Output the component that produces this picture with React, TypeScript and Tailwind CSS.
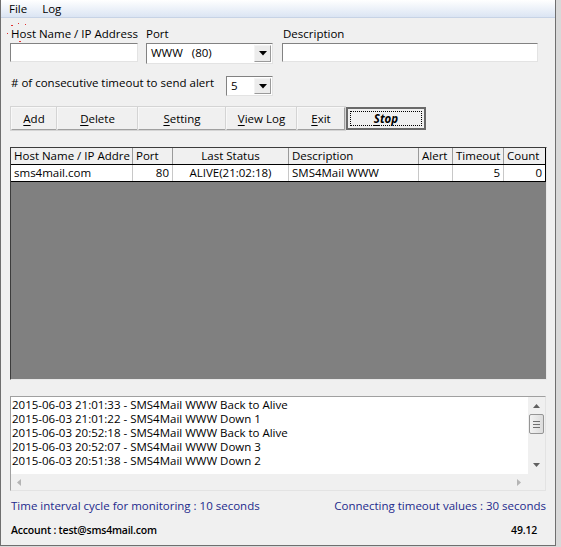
import React from "react";

const COLS = [
  { label: "Host Name / IP Addre", w: "w-[122px]", align: "text-left" },
  { label: "Port", w: "w-[40px]", align: "text-left" },
  { label: "Last Status", w: "w-[116px]", align: "text-center" },
  { label: "Description", w: "w-[130px]", align: "text-left" },
  { label: "Alert", w: "w-[34px]", align: "text-left" },
  { label: "Timeout", w: "w-[51px]", align: "text-left" },
  { label: "Count", w: "w-[41px]", align: "text-left" },
];

const ROW = [
  { v: "sms4mail.com", align: "text-left" },
  { v: "80", align: "text-right" },
  { v: "ALIVE(21:02:18)", align: "text-center" },
  { v: "SMS4Mail WWW", align: "text-left" },
  { v: "", align: "text-left" },
  { v: "5", align: "text-right" },
  { v: "0", align: "text-right" },
];

const LOG = [
  "2015-06-03 21:01:33 - SMS4Mail WWW Back to Alive",
  "2015-06-03 21:01:22 - SMS4Mail WWW Down 1",
  "2015-06-03 20:52:18 - SMS4Mail WWW Back to Alive",
  "2015-06-03 20:52:07 - SMS4Mail WWW Down 3",
  "2015-06-03 20:51:38 - SMS4Mail WWW Down 2",
];

const sunken =
  "border border-t-[#828282] border-l-[#828282] border-b-[#e3e3e3] border-r-[#e3e3e3] bg-white";

function DropArrow() {
  return (
    <div className="flex w-[17px] items-center justify-center border border-t-[#f4f4f4] border-l-[#f4f4f4] border-b-[#9a9a9a] border-r-[#9a9a9a] bg-[#ececec]">
      <svg width="8" height="5" viewBox="0 0 8 5">
        <polygon points="0,0 8,0 4,4.5" fill="#000" />
      </svg>
    </div>
  );
}

function Combo({ value, className }: { value: string; className: string }) {
  return (
    <div className={`flex h-[20px] items-stretch p-px ${sunken} ${className}`}>
      <div className="flex-1 pl-[3px] leading-[16px] whitespace-pre">{value}</div>
      <DropArrow />
    </div>
  );
}

function Btn({ pre, u, post, className }: { pre?: string; u: string; post: string; className: string }) {
  return (
    <div
      className={`flex h-[23px] items-center justify-center border border-t-[#f8f8f8] border-l-[#f8f8f8] border-b-[#a0a0a0] border-r-[#a0a0a0] bg-[#f0f0f0] outline outline-[#d4d4d4] ${className}`}
    >
      <span>
        {pre}
        <span className="underline underline-offset-2">{u}</span>
        {post}
      </span>
    </div>
  );
}

export default function App() {
  return (
    <div className="h-[547px] w-[561px] overflow-hidden bg-[#d9d9d9] font-['Open_Sans',sans-serif] text-[11.5px] text-black">
      <div className="flex h-[546px] w-[556px] flex-col border-x border-b border-[#6f6f6f] bg-[#f0f0f0]">
        {/* menu */}
        <div className="flex h-[18px] items-center gap-[15px] border-b border-[#c7d3e5] bg-linear-to-b from-[#ffffff] to-[#dbe5f3] pl-[8px] leading-[16px]">
          <span>File</span>
          <span>Log</span>
        </div>

        <div className="relative flex flex-col pl-[9px]">
          {/* focus dots */}
          <span className="absolute left-[10px] top-[7px] h-px w-[2px] bg-[#e03030]" />
          <span className="absolute left-[17px] top-[5px] h-px w-px bg-[#e03030]" />
          <span className="absolute left-[24px] top-[6px] h-px w-px bg-[#e03030]" />
          <span className="absolute left-[6px] top-[15px] h-px w-px bg-[#e03030]" />
          <span className="absolute left-[18px] top-[23px] h-px w-[2px] bg-[#e03030]" />

          {/* row 1 */}
          <div className="mt-[8px] flex h-[38px] items-start">
            <div className="flex w-[128px] flex-col">
              <div className="pl-px leading-[16px]">Host Name / IP Address</div>
              <div className={`mt-px h-[19px] w-[128px] ${sunken}`} />
            </div>
            <div className="ml-[8px] flex w-[127px] flex-col">
              <div className="leading-[16px]">Port</div>
              <Combo value="WWW   (80)" className="mt-px w-[127px] h-[21px]" />
            </div>
            <div className="ml-[9px] flex w-[256px] flex-col">
              <div className="pl-px leading-[16px]">Description</div>
              <div className={`mt-px h-[19px] w-[256px] ${sunken}`} />
            </div>
          </div>

          {/* row 2 */}
          <div className="mt-[12px] flex h-[20px] items-start">
            <div className="w-[216px] pl-px leading-[14px]">
              # of consecutive timeout to send alert
            </div>
            <Combo value="5" className="w-[47px]" />
          </div>

          {/* buttons */}
          <div className="mt-[11px] flex pl-px">
            <Btn u="A" post="dd" className="w-[46px]" />
            <Btn u="D" post="elete" className="w-[81px]" />
            <Btn u="S" post="etting" className="w-[88px]" />
            <Btn u="V" post="iew Log" className="w-[71px]" />
            <Btn u="E" post="xit" className="w-[48px]" />
            <div className="ml-px flex h-[23px] w-[80px] items-center justify-center border-2 border-[#6a6a6a] bg-[#f0f0f0] p-[2px]">
              <div className="flex h-full w-full items-center justify-center border border-dotted border-black font-bold italic">
                <span>
                  <span className="underline underline-offset-2">S</span>top
                </span>
              </div>
            </div>
          </div>

          {/* table */}
          <div className="mt-[17px] flex h-[233px] w-[537px] flex-col border border-t-[#3c3c3c] border-l-[#3c3c3c] border-b-[#e8e8e8] border-r-[#e8e8e8] bg-[#808080]">
            <div className="flex w-[535px] flex-col border-r border-black">
              <div className="flex h-[17px] border-b border-black bg-[#f0f0f0] leading-[16px]">
                {COLS.map((c, i) => (
                  <div
                    key={i}
                    className={`${c.w} ${c.align} overflow-hidden whitespace-nowrap border-r border-[#9a9a9a] px-[3px] last:border-r-0`}
                  >
                    {c.label}
                  </div>
                ))}
              </div>
              <div className="flex h-[17px] border-b border-black bg-white leading-[16px]">
                {ROW.map((c, i) => (
                  <div
                    key={i}
                    className={`${COLS[i].w} ${c.align} overflow-hidden whitespace-nowrap border-r border-[#c8c8c8] px-[3px] last:border-r-0`}
                  >
                    {c.v}
                  </div>
                ))}
              </div>
            </div>
          </div>

          {/* log list */}
          <div className={`mt-[16px] flex h-[95px] w-[536px] flex-col ${sunken} border-t-[#a0a0a0] border-l-[#a0a0a0]`}>
            <div className="flex flex-1">
              <div className="flex-1 overflow-hidden pl-px pt-[1px] leading-[14px] whitespace-nowrap">
                {LOG.map((l, i) => (
                  <div key={i}>{l}</div>
                ))}
              </div>
              {/* vertical scrollbar */}
              <div className="flex w-[17px] flex-col items-center bg-[#f0f0f0]">
                <svg className="mt-[7px]" width="7" height="4" viewBox="0 0 7 4">
                  <polygon points="0,4 7,4 3.5,0" fill="#606060" />
                </svg>
                <div className="mt-[6px] flex h-[20px] w-[15px] flex-col items-center justify-center gap-[2px] rounded-[2px] border border-[#959595] bg-linear-to-r from-[#f2f2f2] to-[#dcdcdc]">
                  <div className="h-px w-[7px] bg-[#707070]" />
                  <div className="h-px w-[7px] bg-[#707070]" />
                  <div className="h-px w-[7px] bg-[#707070]" />
                </div>
                <div className="flex-1" />
                <svg className="mb-[7px]" width="7" height="4" viewBox="0 0 7 4">
                  <polygon points="0,0 7,0 3.5,4" fill="#606060" />
                </svg>
              </div>
            </div>
            {/* horizontal scrollbar */}
            <div className="flex h-[16px] items-center bg-[#f0f0f0]">
              <svg className="ml-[6px]" width="4" height="7" viewBox="0 0 4 7">
                <polygon points="4,0 4,7 0,3.5" fill="#b4b4b4" />
              </svg>
              <div className="flex-1" />
              <svg className="mr-[24px]" width="4" height="7" viewBox="0 0 4 7">
                <polygon points="0,0 0,7 4,3.5" fill="#b4b4b4" />
              </svg>
            </div>
          </div>

          {/* status */}
          <div className="mt-[7px] flex w-[536px] justify-between pl-px leading-[16px] text-[#232a8c]">
            <span>Time interval cycle for monitoring : 10 seconds</span>
            <span>Connecting timeout values : 30 seconds</span>
          </div>

          <div className="mt-[8px] flex w-[536px] justify-between pl-px pr-[9px] text-[10.5px] font-semibold leading-[16px] tracking-[-0.2px]">
            <span>Account : test@sms4mail.com</span>
            <span>49.12</span>
          </div>
        </div>
      </div>
    </div>
  );
}
